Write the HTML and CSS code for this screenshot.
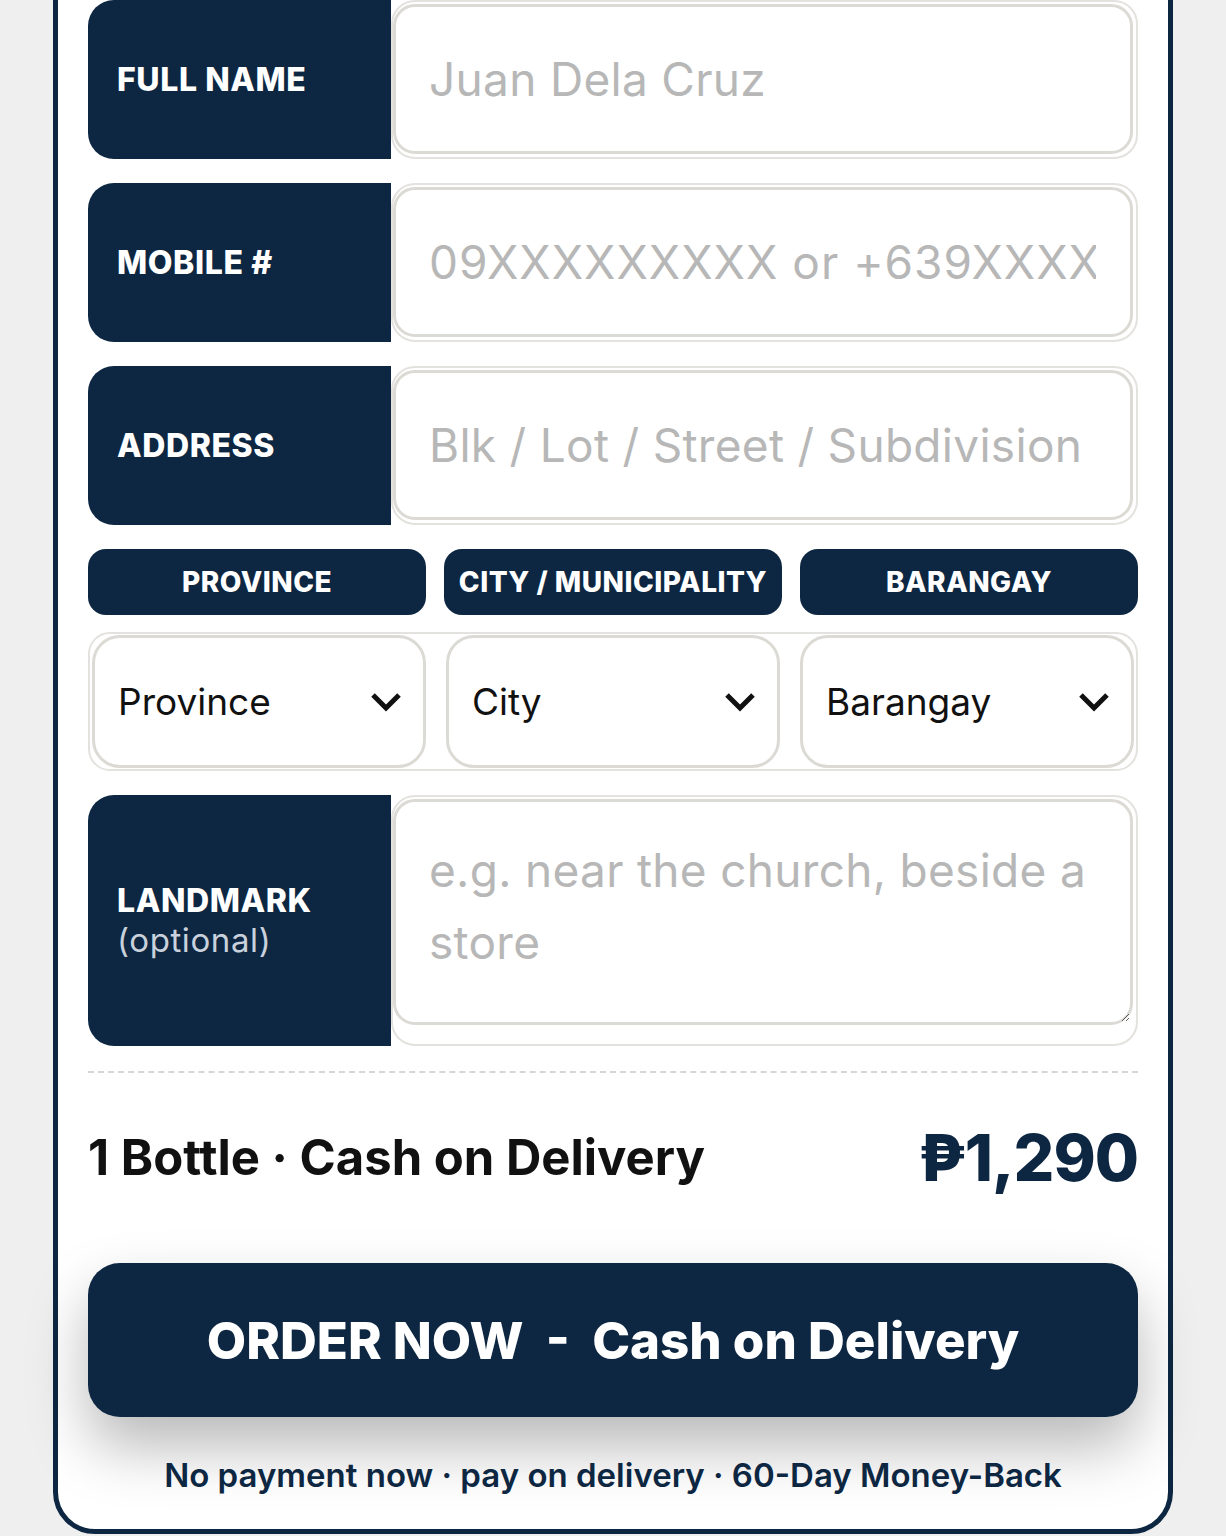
FILE: index.html
```html
<!DOCTYPE html>
<html lang="en">
<head>
    <meta charset="UTF-8">
    <meta name="viewport" content="width=device-width, initial-scale=1.0">
    <title>Order Form - Cash on Delivery</title>
    <link rel="stylesheet" href="styles.css">
</head>
<body>
    <div class="card">
        <form class="order-form">
            <!-- Full name -->
            <div class="row">
                <label class="tag" for="full-name">FULL NAME</label>
                <div class="field-box">
                    <input type="text" id="full-name" placeholder="Juan Dela Cruz">
                </div>
            </div>

            <!-- Mobile -->
            <div class="row">
                <label class="tag" for="mobile">MOBILE #</label>
                <div class="field-box">
                    <input type="tel" id="mobile" class="mobile-input" placeholder="09XXXXXXXXX or +639XXXXXXXXX">
                </div>
            </div>

            <!-- Address -->
            <div class="row">
                <label class="tag" for="address">ADDRESS</label>
                <div class="field-box">
                    <input type="text" id="address" placeholder="Blk / Lot / Street / Subdivision">
                </div>
            </div>

            <!-- Location selects -->
            <div class="loc-heads">
                <div class="pill">PROVINCE</div>
                <div class="pill">CITY / MUNICIPALITY</div>
                <div class="pill">BARANGAY</div>
            </div>
            <div class="loc-selects">
                <div class="select-wrap">
                    <select id="province"><option>Province</option></select>
                    <svg class="chev" viewBox="0 0 32 20" width="32" height="20"><path d="M3 3 L16 16 L29 3" fill="none" stroke="#111" stroke-width="5"/></svg>
                </div>
                <div class="select-wrap">
                    <select id="city"><option>City</option></select>
                    <svg class="chev" viewBox="0 0 32 20" width="32" height="20"><path d="M3 3 L16 16 L29 3" fill="none" stroke="#111" stroke-width="5"/></svg>
                </div>
                <div class="select-wrap">
                    <select id="barangay"><option>Barangay</option></select>
                    <svg class="chev" viewBox="0 0 32 20" width="32" height="20"><path d="M3 3 L16 16 L29 3" fill="none" stroke="#111" stroke-width="5"/></svg>
                </div>
            </div>

            <!-- Landmark -->
            <div class="row row-tall">
                <label class="tag tag-stack" for="landmark">LANDMARK <span class="opt">(optional)</span></label>
                <div class="field-box">
                    <textarea id="landmark" placeholder="e.g. near the church, beside a store"></textarea>
                </div>
            </div>

            <div class="divider"></div>

            <div class="summary">
                <span class="summary-text">1 Bottle · Cash on Delivery</span>
                <span class="price">₱1,290</span>
            </div>

            <button type="submit" class="order-btn">ORDER NOW &nbsp;-&nbsp; Cash on Delivery</button>

            <p class="note">No payment now · pay on delivery · 60-Day Money-Back</p>
        </form>
    </div>
</body>
</html>
```

FILE: styles.css
```css
body {
    margin: 0;
    padding: 0;
    background: #efefef;
    font-family: 'Inter', 'Roboto', sans-serif;
    color: #111;
}

.card {
    margin: -65px 53px 4px;
    padding: 60px 30px 34px;
    background: #fff;
    border: 5px solid #0d2742;
    border-radius: 0 0 42px 42px;
}

.order-form {
    display: flex;
    flex-direction: column;
}

.row {
    display: flex;
    height: 159px;
    margin-bottom: 24px;
}

.tag {
    width: 303px;
    flex-shrink: 0;
    background: #0d2742;
    color: #fff;
    border-radius: 26px 0 0 26px;
    padding-left: 29px;
    box-sizing: border-box;
    display: flex;
    align-items: center;
    font-weight: 800;
    font-size: 32px;
    letter-spacing: 0.6px;
}

.tag-stack {
    flex-direction: column;
    align-items: flex-start;
    justify-content: center;
}

.opt {
    font-weight: 400;
    font-size: 33px;
    color: #c9d1dc;
    letter-spacing: 0.6px;
}

.field-box {
    flex: 1;
    display: flex;
    border: 2px solid #e4e2de;
    border-radius: 24px;
    padding: 2px 3px 3px 0;
}

input,
textarea {
    width: 100%;
    box-sizing: border-box;
    border: 3px solid #dcdad4;
    border-radius: 22px;
    font-family: 'Inter', 'Roboto', sans-serif;
    font-size: 46px;
    letter-spacing: 0.3px;
    color: #111;
    background: #fff;
    outline: none;
}

input {
    height: 100%;
    padding: 0 34px 0 33px;
}

.mobile-input {
    letter-spacing: 1px;
}

input::placeholder,
textarea::placeholder {
    color: #b7b7b7;
}

.row-tall {
    height: 251px;
}

.row-tall .field-box {
    align-items: flex-start;
    padding-bottom: 0;
}

textarea {
    height: 226px;
    padding: 32px 30px 0 33px;
    line-height: 72px;
    resize: vertical;
}

.loc-heads {
    display: grid;
    grid-template-columns: repeat(3, 1fr);
    gap: 18px;
    margin-bottom: 17px;
}

.pill {
    height: 66px;
    background: #0d2742;
    color: #fff;
    border-radius: 18px;
    display: flex;
    align-items: center;
    justify-content: center;
    font-weight: 800;
    font-size: 28px;
    letter-spacing: 0.5px;
}

.loc-selects {
    display: grid;
    grid-template-columns: repeat(3, 1fr);
    gap: 20px;
    border: 2px solid #e4e2de;
    border-radius: 22px;
    padding: 1px 2px;
    margin-bottom: 24px;
}

.select-wrap {
    position: relative;
}

select {
    appearance: none;
    -webkit-appearance: none;
    width: 100%;
    height: 133px;
    border: 3px solid #dcdad4;
    border-radius: 28px;
    background: #fff;
    padding: 0 60px 0 23px;
    font-family: 'Inter', 'Roboto', sans-serif;
    font-size: 37px;
    color: #111;
    outline: none;
}

.chev {
    position: absolute;
    right: 24px;
    top: 57px;
    pointer-events: none;
}

.divider {
    border-top: 2px dashed #d6d6d6;
    margin-top: 1px;
}

.summary {
    display: flex;
    justify-content: space-between;
    align-items: center;
    padding: 49px 0 0;
    height: 70px;
}

.summary-text {
    font-weight: 700;
    font-size: 49px;
    color: #111;
}

.price {
    font-weight: 800;
    font-size: 64px;
    color: #0d2742;
    letter-spacing: -1px;
}

.order-btn {
    margin-top: 71px;
    height: 154px;
    border: none;
    border-radius: 32px;
    background: #0d2742;
    color: #fff;
    font-family: 'Inter', 'Roboto', sans-serif;
    font-weight: 800;
    font-size: 51px;
    cursor: pointer;
    box-shadow: 0 30px 60px rgba(0, 0, 0, 0.28);
}

.note {
    margin: 38px 0 0;
    text-align: center;
    font-weight: 600;
    font-size: 33px;
    color: #0d2742;
}
```
